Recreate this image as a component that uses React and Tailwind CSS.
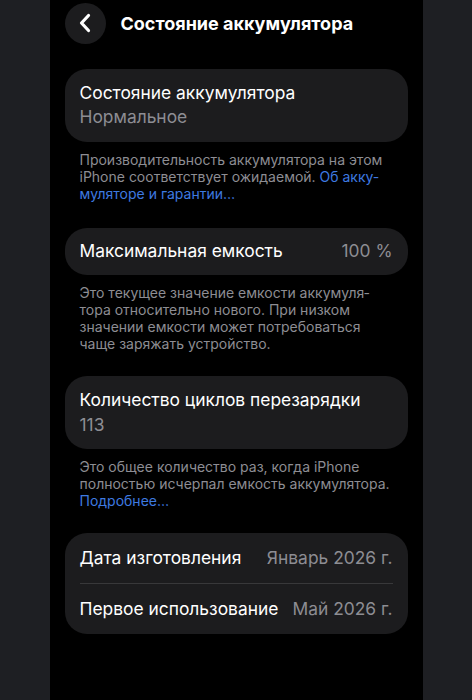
import React from 'react'

const font = { fontFamily: 'Inter, "Noto Sans", sans-serif' }

const Footer = ({ children }) => (
  <p className="px-[15px] pt-[9px] text-[14px] leading-[17px] text-[#8d8d93]" lang="ru">
    {children}
  </p>
)

const Row = ({ label, value }) => (
  <div className="flex items-center justify-between h-[50px]">
    <span className="text-[17.4px] text-white">{label}</span>
    <span className="text-[17.4px] text-[#8d8d93]">{value}</span>
  </div>
)

export default function App() {
  return (
    <div className="min-h-screen w-full bg-[#1e1f23] flex justify-center" style={font}>
      {/* phone screen */}
      <div className="relative w-[373px] min-h-[700px] bg-black px-[15px]">
        {/* header */}
        <div className="flex items-center gap-[15px] h-[44px] mt-[1px]">
          <button className="w-[41px] h-[41px] rounded-full bg-[#1c1c1e] flex items-center justify-center">
            <svg width="14" height="20" viewBox="0 0 14 20" fill="none">
              <path d="M10.5 2.5 L3.5 10 L10.5 17.5" stroke="white" strokeWidth="3.2" strokeLinecap="round" strokeLinejoin="round" />
            </svg>
          </button>
          <h1 className="text-[18px] font-bold text-white">Состояние аккумулятора</h1>
        </div>

        {/* card 1 */}
        <div className="mt-[24px] rounded-[22px] bg-[#1c1c1e] px-[15px] pt-[12px] pb-[13px]">
          <div className="text-[17.4px] leading-[24px] text-white">Состояние аккумулятора</div>
          <div className="text-[17.4px] leading-[24px] text-[#8d8d93]">Нормальное</div>
        </div>
        <Footer>
          Производительность аккумулятора на этом iPhone соответствует ожидаемой.{' '}
          <span className="text-[#3e7ae0]">Об акку­муляторе и гарантии…</span>
        </Footer>

        {/* card 2 */}
        <div className="mt-[26px] rounded-[22px] bg-[#1c1c1e] px-[15px]">
          <div className="flex items-center justify-between h-[47px]">
            <span className="text-[17.4px] text-white">Максимальная емкость</span>
            <span className="text-[17.4px] text-[#8d8d93]">100 %</span>
          </div>
        </div>
        <Footer>
          Это текущее значение емкости аккумуля­тора относительно нового. При низком значении емкости может потребоваться чаще заряжать устройство.
        </Footer>

        {/* card 3 */}
        <div className="mt-[24px] rounded-[22px] bg-[#1c1c1e] px-[15px] pt-[11px] pb-[12px]">
          <div className="text-[17.4px] leading-[25px] text-white">Количество циклов перезарядки</div>
          <div className="text-[17.4px] leading-[25px] text-[#8d8d93]">113</div>
        </div>
        <Footer>
          Это общее количество раз, когда iPhone полностью исчерпал емкость аккумулятора.{' '}
          <span className="text-[#3e7ae0]">Подробнее…</span>
        </Footer>

        {/* card 4 */}
        <div className="mt-[24px] rounded-[22px] bg-[#1c1c1e] px-[15px]">
          <Row label="Дата изготовления" value="Январь 2026 г." />
          <div className="h-px bg-[#38383a]" />
          <Row label="Первое использование" value="Май 2026 г." />
        </div>
      </div>
    </div>
  )
}
